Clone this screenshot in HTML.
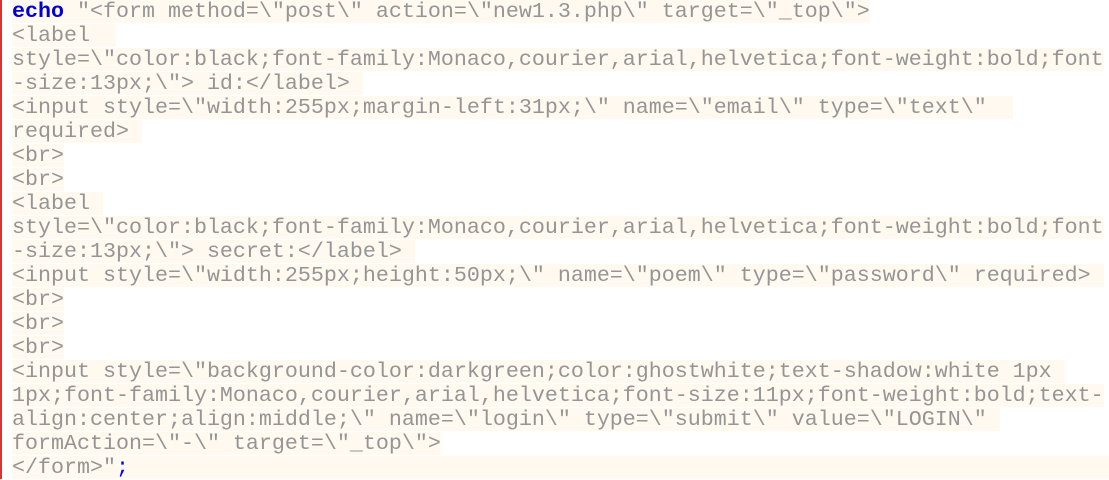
<!DOCTYPE html>
<html><head><style>
html,body{margin:0;padding:0;background:#fff;width:1109px;height:479px;overflow:hidden}
.wrap{position:absolute;left:0;top:0;width:1109px;height:479px;border-left:2px solid #e03030;box-sizing:border-box}
.l{position:absolute;left:10px;height:23px;line-height:23px;white-space:pre;font-family:"Liberation Mono","Courier New",monospace;font-size:21.67px;color:#959595}
.l span.h{background:#fff9f0;display:inline-block;height:23px}
b{color:#0000d0}
.s{color:#0000ff}
</style></head><body><div class="wrap">
<div class="l" style="top:0"><span class="h"><b>echo</b> "&lt;form method=\"post\" action=\"new1.3.php\" target=\"_top\"&gt;</span></div>
<div class="l" style="top:24px"><span class="h">&lt;label  </span></div>
<div class="l" style="top:48px"><span class="h">style=\"color:black;font-family:Monaco,courier,arial,helvetica;font-weight:bold;font</span></div>
<div class="l" style="top:72px"><span class="h">-size:13px;\"&gt; id:&lt;/label&gt; </span></div>
<div class="l" style="top:96px"><span class="h">&lt;input style=\"width:255px;margin-left:31px;\" name=\"email\" type=\"text\"  </span></div>
<div class="l" style="top:120px"><span class="h">required&gt; </span></div>
<div class="l" style="top:144px"><span class="h">&lt;br&gt;</span></div>
<div class="l" style="top:168px"><span class="h">&lt;br&gt;</span></div>
<div class="l" style="top:192px"><span class="h">&lt;label </span></div>
<div class="l" style="top:216px"><span class="h">style=\"color:black;font-family:Monaco,courier,arial,helvetica;font-weight:bold;font</span></div>
<div class="l" style="top:240px"><span class="h">-size:13px;\"&gt; secret:&lt;/label&gt; </span></div>
<div class="l" style="top:264px"><span class="h">&lt;input style=\"width:255px;height:50px;\" name=\"poem\" type=\"password\" required&gt; </span></div>
<div class="l" style="top:288px"><span class="h">&lt;br&gt;</span></div>
<div class="l" style="top:312px"><span class="h">&lt;br&gt;</span></div>
<div class="l" style="top:336px"><span class="h">&lt;br&gt;</span></div>
<div class="l" style="top:360px"><span class="h">&lt;input style=\"background-color:darkgreen;color:ghostwhite;text-shadow:white 1px </span></div>
<div class="l" style="top:384px"><span class="h">1px;font-family:Monaco,courier,arial,helvetica;font-size:11px;font-weight:bold;text-</span></div>
<div class="l" style="top:408px"><span class="h">align:center;align:middle;\" name=\"login\" type=\"submit\" value=\"LOGIN\" </span></div>
<div class="l" style="top:432px"><span class="h">formAction=\"-\" target=\"_top\"&gt;</span></div>
<div class="l" style="top:456px;width:1097px;background:#fff9f0"><span>&lt;/form&gt;"<span class="s">;</span></span></div>
</div></body></html>
